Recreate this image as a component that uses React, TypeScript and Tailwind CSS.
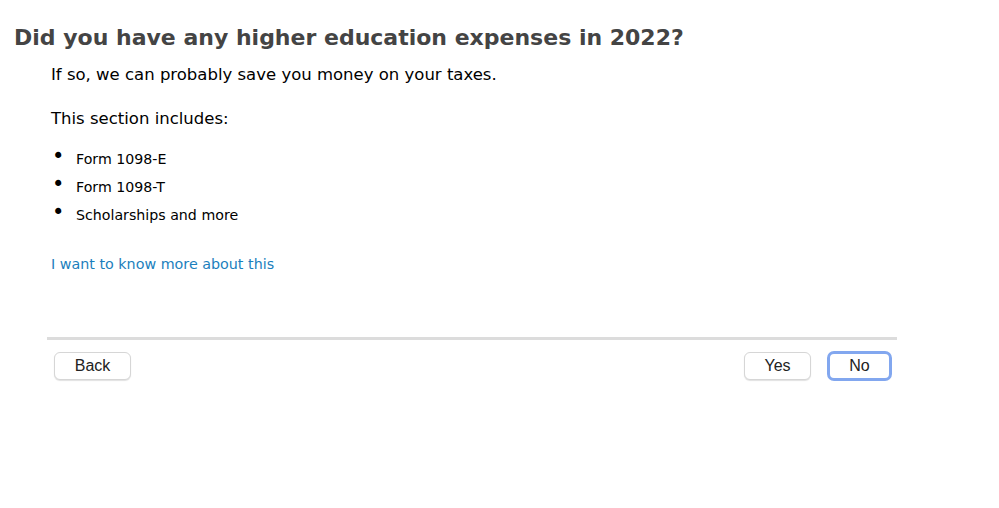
import React from 'react';

const items = ['Form 1098-E', 'Form 1098-T', 'Scholarships and more'];

const App: React.FC = () => {
  return (
    <div className="w-[999px] h-[508px] bg-white font-['DejaVu_Sans',sans-serif] text-black">
      <div className="pt-[22px] pl-[14px]">
        <h1 className="text-[22px] leading-[32px] font-bold text-[#444]">
          Did you have any higher education expenses in 2022?
        </h1>
      </div>
      <div className="pl-[51px]">
        <p className="mt-[10px] text-[16.5px] leading-[22px]">If so, we can probably save you money on your taxes.</p>
        <p className="mt-[22px] text-[16.5px] leading-[22px]">This section includes:</p>
        <ul className="mt-[19px] flex flex-col gap-[8px]">
          {items.map(item => (
            <li key={item} className="flex items-center text-[14.2px] leading-[20px]">
              <span className="w-[25px] pl-[1px] text-[21px] leading-[20px] -mt-[6px]">•</span>
              {item}
            </li>
          ))}
        </ul>
        <a href="#" className="block mt-[29px] text-[14.3px] leading-[20px] text-[#1b7fbd]">
          I want to know more about this
        </a>
      </div>
      <div className="mt-[63px] ml-[47px] w-[850px] h-[3px] bg-[#dcdcdc]" />
      <div className="ml-[54px] w-[838px] mt-[11px] flex items-center justify-between font-['Liberation_Sans',sans-serif] text-[16px] text-[#222]">
        <button className="w-[77px] h-[28px] rounded-[6px] bg-white border border-[#d6d6d6] shadow-[0_1px_1px_rgba(0,0,0,0.12)]">Back</button>
        <div className="flex items-center gap-[16px]">
          <button className="w-[67px] h-[28px] rounded-[6px] bg-white border border-[#d6d6d6] shadow-[0_1px_1px_rgba(0,0,0,0.12)]">Yes</button>
          <button className="w-[65px] h-[30px] rounded-[7px] bg-white border-[3px] border-[#82a7ef]">No</button>
        </div>
      </div>
    </div>
  );
};

export default App;
